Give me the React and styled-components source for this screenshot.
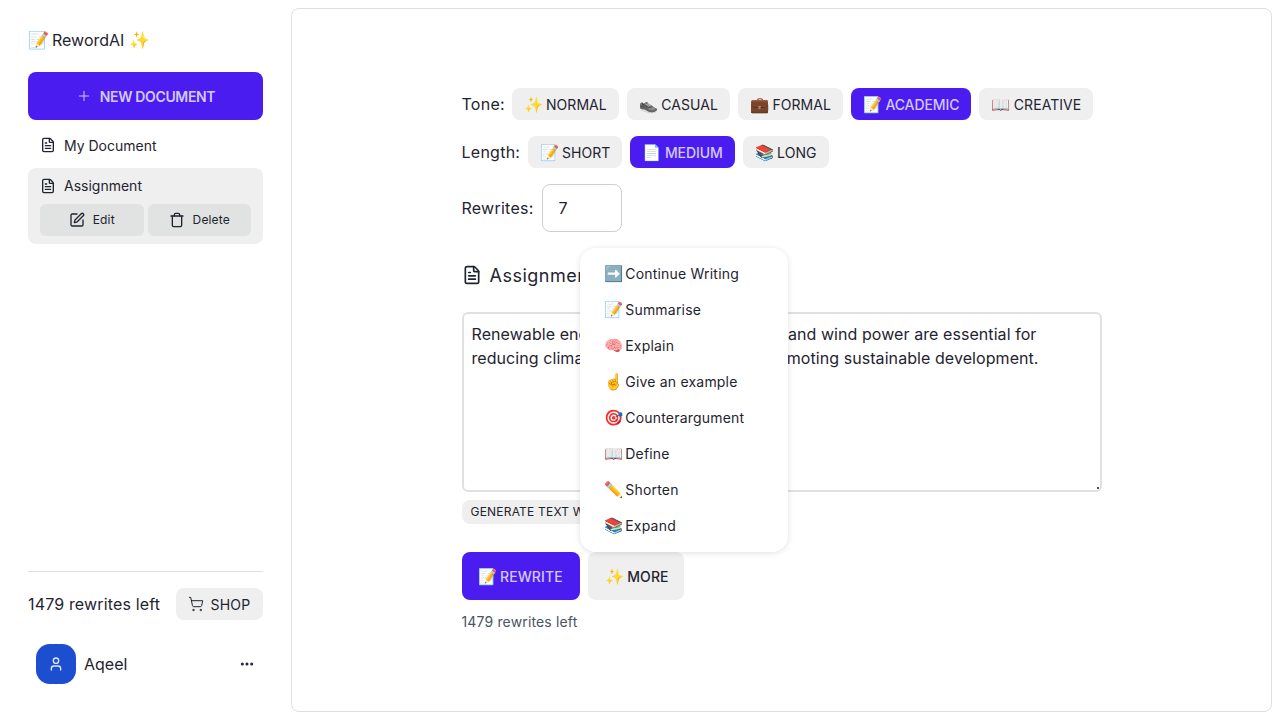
import styled, { createGlobalStyle } from "styled-components";
import {
  FileText,
  SquarePen,
  Trash,
  ShoppingCart,
  User,
  Plus,
  Ellipsis,
} from "lucide-react";

const Purple = "#4b1cf0";
const PurpleText = "#d3c9fc";
const Ink = "#1f2430";
const Soft = "#efefef";

const GlobalStyle = createGlobalStyle`
  html, body { margin: 0; padding: 0; background: #fff; }
  body {
    font-family: Inter, "Noto Sans", sans-serif;
    color: ${Ink};
    overflow: hidden;
  }
  * { box-sizing: border-box; }
`;

const Page = styled.div`
  display: flex;
  width: 1280px;
  height: 720px;
`;

const Sidebar = styled.aside`
  width: 291px;
  flex: none;
  display: flex;
  flex-direction: column;
  padding: 28px 28px 36px 28px;
`;

const Brand = styled.div`
  height: 24px;
  font-size: 16px;
  line-height: 24px;
  margin-bottom: 20px;
  display: flex;
  align-items: center;
  white-space: pre;
`;

const Emoji = styled.span`
  display: inline-block;
  width: 18px;
  margin-right: 4.5px;
  font-size: 15.5px;
  text-align: center;
  filter: ${(p) => (p.$gray ? "grayscale(1)" : "none")};
`;

const BrandEmoji = styled(Emoji)`
  width: 20px;
  margin: 0 4px 0 0;
  font-size: 17px;
`;

const TrailingEmoji = styled(BrandEmoji)`
  margin: 0 0 0 5px;
`;

const MenuEmoji = styled(Emoji)`
  margin-right: 3.5px;
`;

const NewDoc = styled.button`
  height: 48px;
  border: 0;
  border-radius: 8px;
  background: ${Purple};
  color: ${PurpleText};
  font: 600 14px Inter, sans-serif;
  letter-spacing: -0.35px;
  display: flex;
  align-items: center;
  justify-content: center;
  gap: 8px;
  margin-bottom: 8px;
`;

const DocRow = styled.div`
  height: 36px;
  display: flex;
  align-items: center;
  gap: 8px;
  padding: 0 12px 2px;
  font-size: 14px;
  margin-bottom: 4px;
`;

const ActiveDoc = styled.div`
  background: ${Soft};
  border-radius: 8px;
  height: 76px;
  padding: 0 12px;
`;

const ActiveTitle = styled(DocRow)`
  padding: 0 0 1px;
  margin-bottom: 0;
`;

const DocActions = styled.div`
  display: flex;
  gap: 4px;
`;

const SmallAction = styled.button`
  flex: 1;
  height: 32px;
  padding: 0 0 1px;
  border: 0;
  border-radius: 6px;
  background: #e1e2e2;
  color: ${Ink};
  font: 400 12px Inter, sans-serif;
  letter-spacing: 0.15px;
  display: flex;
  align-items: center;
  justify-content: center;
  gap: 8px;
`;

const SideFoot = styled.div`
  margin-top: auto;
  border-top: 1px solid #dfdfdf;
  padding-top: 16px;
`;

const ShopRow = styled.div`
  display: flex;
  align-items: center;
  justify-content: space-between;
  font-size: 16px;
  letter-spacing: 0.15px;
  margin-bottom: 24px;
`;

const ShopButton = styled.button`
  height: 32px;
  width: 87px;
  border: 0;
  border-radius: 8px;
  background: ${Soft};
  color: ${Ink};
  font: 400 14px Inter, sans-serif;
  letter-spacing: 0.3px;
  display: flex;
  align-items: center;
  justify-content: center;
  gap: 6px;
`;

const UserRow = styled.div`
  display: flex;
  align-items: center;
  padding: 0 8px;
  gap: 8px;
  font-size: 16px;
`;

const Avatar = styled.div`
  width: 40px;
  height: 40px;
  border-radius: 14px;
  background: #1d4ed0;
  color: #dce6fb;
  display: flex;
  align-items: center;
  justify-content: center;
`;

const UserMenu = styled.div`
  margin-left: auto;
  display: flex;
`;

const Main = styled.main`
  flex: 1;
  margin: 8px 8px 8px 0;
  border: 1px solid #dedede;
  border-radius: 8px;
  display: flex;
  justify-content: center;
  padding-top: 79px;
`;

const Column = styled.div`
  width: 640px;
`;

const OptionRow = styled.div`
  display: flex;
  align-items: center;
  gap: 8px;
  margin-bottom: 16px;
`;

const OptionLabel = styled.span`
  width: ${(p) => p.$width}px;
  font-size: 16px;
  letter-spacing: 0.25px;
  white-space: nowrap;
`;

const Chip = styled.button`
  height: 32px;
  padding: 0 12px;
  border: 0;
  border-radius: 8px;
  background: ${(p) => (p.$on ? Purple : Soft)};
  color: ${(p) => (p.$on ? PurpleText : Ink)};
  font: ${(p) => (p.$on ? 500 : 400)} 14px Inter, sans-serif;
  letter-spacing: ${(p) => (p.$on ? "-0.1px" : "0.05px")};
  white-space: nowrap;
`;

const CountInput = styled.input`
  width: 80px;
  height: 48px;
  border: 1px solid #cfcfcf;
  border-radius: 8px;
  padding: 0 16px;
  font: 400 16px Inter, sans-serif;
  color: ${Ink};
  outline: none;
`;

const DocHeading = styled.div`
  display: flex;
  align-items: center;
  gap: 8px;
  height: 28px;
  margin-top: 29px;
  font-size: 18px;
  font-weight: 400;
  letter-spacing: 0.5px;
`;

const TextBox = styled.textarea`
  display: block;
  width: 100%;
  height: 180px;
  margin-top: 23px;
  border: 2px solid #e0e0e0;
  border-radius: 6px;
  padding: 8px;
  font: 400 16px/24px Inter, sans-serif;
  letter-spacing: 0.07px;
  color: ${Ink};
  outline: none;

  &::-webkit-resizer {
    background: radial-gradient(circle at calc(100% - 2px) calc(100% - 2px), #555 1px, transparent 1.5px);
  }
`;

const GenerateChip = styled.div`
  display: inline-block;
  height: 24px;
  margin-top: 8px;
  padding: 0 9px;
  border-radius: 8px;
  background: ${Soft};
  font-size: 12px;
  font-weight: 400;
  line-height: 24px;
  letter-spacing: 0.2px;
`;

const ActionRow = styled.div`
  display: flex;
  gap: 8px;
  margin-top: 28px;
`;

const BigButton = styled.button`
  height: 48px;
  padding: 0 17px 0 16px;
  border: 0;
  border-radius: 8px;
  background: ${(p) => (p.$on ? Purple : Soft)};
  color: ${(p) => (p.$on ? PurpleText : Ink)};
  font: 500 14px Inter, sans-serif;
  letter-spacing: 0.1px;
  white-space: nowrap;
`;

const MoreButton = styled(BigButton)`
  padding: 0 15px 0 17px;
`;

const MoreWrap = styled.div`
  position: relative;
`;

const Menu = styled.ul`
  position: absolute;
  left: -8px;
  bottom: 100%;
  width: 208px;
  margin: 0;
  padding: 8px;
  list-style: none;
  background: #fff;
  border-radius: 16px;
  box-shadow: 0 1px 6px rgba(0, 0, 0, 0.12);
`;

const MenuItem = styled.li`
  height: 36px;
  padding: 0 16px;
  font-size: 14px;
  letter-spacing: 0.2px;
  line-height: 36px;
  white-space: nowrap;
`;

const LeftNote = styled.div`
  margin-top: 13px;
  font-size: 14px;
  letter-spacing: 0.15px;
  color: #4b5563;
`;

const menuItems = [
  ["➡️", "Continue Writing"],
  ["📝", "Summarise"],
  ["🧠", "Explain"],
  ["☝️", "Give an example"],
  ["🎯", "Counterargument"],
  ["📖", "Define"],
  ["✏️", "Shorten"],
  ["📚", "Expand"],
];

const tones = [
  ["✨", "NORMAL", false],
  ["👟", "CASUAL", false],
  ["💼", "FORMAL", false],
  ["📝", "ACADEMIC", true],
  ["📖", "CREATIVE", false],
];

const lengths = [
  ["📝", "SHORT", false],
  ["📄", "MEDIUM", true],
  ["📚", "LONG", false],
];

export default function App() {
  return (
    <Page>
      <GlobalStyle />
      <Sidebar>
        <Brand>
          <BrandEmoji>📝</BrandEmoji>
          RewordAI
          <TrailingEmoji>✨</TrailingEmoji>
        </Brand>
        <NewDoc>
          <Plus size={16} strokeWidth={1.5} />
          NEW DOCUMENT
        </NewDoc>
        <DocRow>
          <FileText size={16} />
          My Document
        </DocRow>
        <ActiveDoc>
          <ActiveTitle>
            <FileText size={16} />
            Assignment
          </ActiveTitle>
          <DocActions>
            <SmallAction>
              <SquarePen size={16} />
              Edit
            </SmallAction>
            <SmallAction>
              <Trash size={16} />
              Delete
            </SmallAction>
          </DocActions>
        </ActiveDoc>
        <SideFoot>
          <ShopRow>
            1479 rewrites left
            <ShopButton>
              <ShoppingCart size={16} strokeWidth={1.5} />
              SHOP
            </ShopButton>
          </ShopRow>
          <UserRow>
            <Avatar>
              <User size={16} />
            </Avatar>
            Aqeel
            <UserMenu>
              <Ellipsis size={16} strokeWidth={2.5} />
            </UserMenu>
          </UserRow>
        </SideFoot>
      </Sidebar>
      <Main>
        <Column>
          <OptionRow>
            <OptionLabel $width={42}>Tone:</OptionLabel>
            {tones.map(([emoji, label, on]) => (
              <Chip key={label} $on={on}>
                <Emoji $gray={label === "CASUAL"}>{emoji}</Emoji>
                {label}
              </Chip>
            ))}
          </OptionRow>
          <OptionRow>
            <OptionLabel $width={58}>Length:</OptionLabel>
            {lengths.map(([emoji, label, on]) => (
              <Chip key={label} $on={on}>
                <Emoji>{emoji}</Emoji>
                {label}
              </Chip>
            ))}
          </OptionRow>
          <OptionRow>
            <OptionLabel $width={72}>Rewrites:</OptionLabel>
            <CountInput type="text" defaultValue="7" />
          </OptionRow>
          <DocHeading>
            <FileText size={20} />
            Assignment
          </DocHeading>
          <TextBox
            spellCheck={false}
            defaultValue="Renewable energy sources such as solar and wind power are essential for reducing climate change impacts and promoting sustainable development."
          />
          <GenerateChip>GENERATE TEXT WITH AI</GenerateChip>
          <ActionRow>
            <BigButton $on>
              <Emoji>📝</Emoji>
              REWRITE
            </BigButton>
            <MoreWrap>
              <MoreButton>
                <Emoji>✨</Emoji>
                MORE
              </MoreButton>
              <Menu>
                {menuItems.map(([emoji, label]) => (
                  <MenuItem key={label}>
                    <MenuEmoji>{emoji}</MenuEmoji>
                    {label}
                  </MenuItem>
                ))}
              </Menu>
            </MoreWrap>
          </ActionRow>
          <LeftNote>1479 rewrites left</LeftNote>
        </Column>
      </Main>
    </Page>
  );
}
